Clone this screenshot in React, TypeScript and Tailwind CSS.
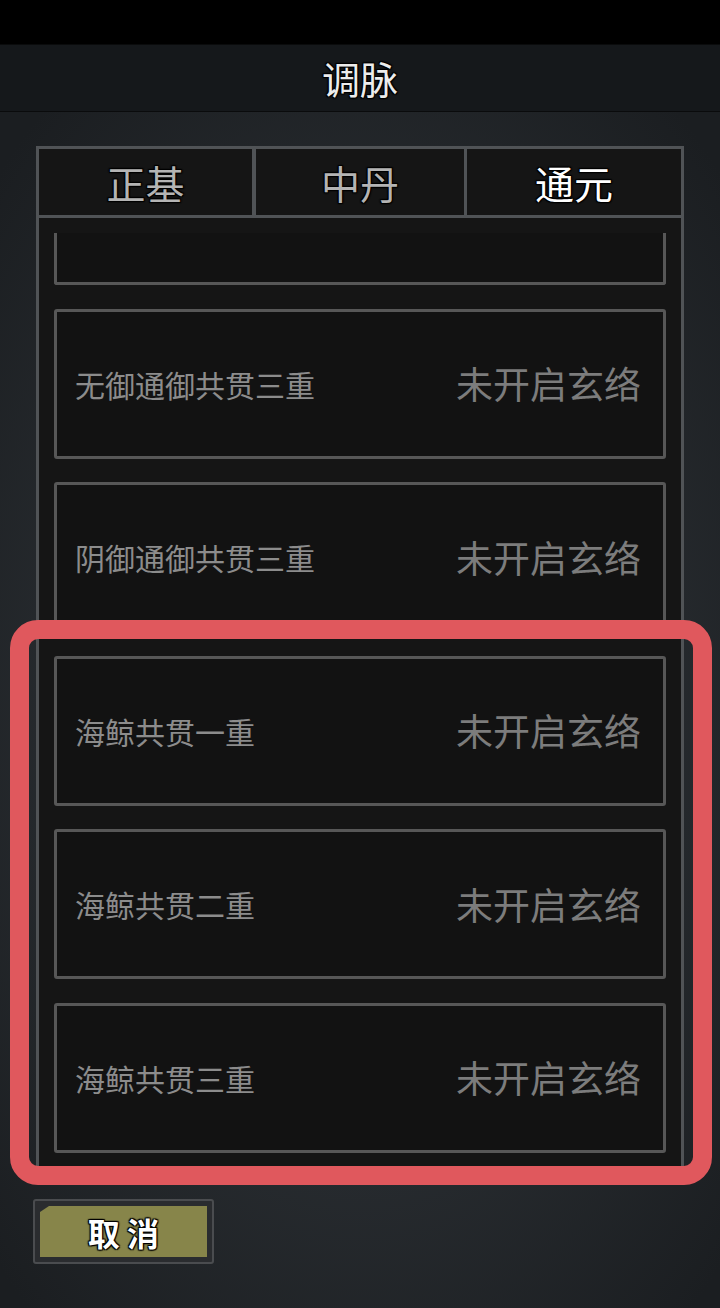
const rows = [
  "无御通御共贯三重",
  "阴御通御共贯三重",
  "海鲸共贯一重",
  "海鲸共贯二重",
  "海鲸共贯三重",
];

const outline = "[text-shadow:0_0_2px_#000,1px_1px_1px_#000,-1px_-1px_1px_#000,1px_-1px_1px_#000,-1px_1px_1px_#000]";

export default function App() {
  return (
    <div
      className="relative w-[720px] h-[1308px] overflow-hidden flex flex-col bg-[radial-gradient(ellipse_70%_60%_at_50%_55%,#33383d_0%,#272b2f_55%,#1b1e21_100%)]"
      style={{ fontFamily: '"Noto Sans CJK SC", "Noto Sans", sans-serif' }}
    >
      <div className="h-[44px] bg-black shrink-0" />

      <div className="h-[68px] shrink-0 bg-[#15181b] border-y border-[#0a0b0c] flex items-center justify-center">
        <span className={`text-[38px] leading-none text-[#ececec] ${outline}`}>调脉</span>
      </div>

      <div className="mt-[34px] ml-[36px] w-[648px] h-[1024px] shrink-0 border-[3px] border-[#505356] bg-[#151515] flex flex-col">
        <div className="h-[69px] flex border-b-[3px] border-[#505356] shrink-0">
          <div className="w-[213px] flex items-center justify-center">
            <span className={`text-[39px] leading-none text-[#b4b4b4] ${outline}`}>正基</span>
          </div>
          <div className="w-[212px] border-l-[4px] border-[#505356] flex items-center justify-center">
            <span className={`text-[39px] leading-none text-[#b4b4b4] ${outline}`}>中丹</span>
          </div>
          <div className="flex-1 border-l-[3px] border-[#505356] flex items-center justify-center">
            <span className={`text-[39px] leading-none text-white ${outline}`}>通元</span>
          </div>
        </div>

        <div className="flex-1 overflow-hidden px-[15px] pt-[15px] flex flex-col gap-[23.5px]">
          <div className="h-[52px] shrink-0 border-x-[3px] border-b-[3px] border-[#575757] rounded-b-[3px] bg-[#121212]" />
          {rows.map((name) => (
            <div
              key={name}
              className="h-[150px] shrink-0 border-[3px] border-[#575757] rounded-[3px] bg-[#121212] flex items-center justify-between pl-[18px] pr-[22px]"
            >
              <span className="text-[30px] leading-none text-[#8c8c8c]">{name}</span>
              <span className="text-[37px] leading-none text-[#7c7c7c]">未开启玄络</span>
            </div>
          ))}
        </div>
      </div>

      <div className="mt-[29px] ml-[33px] w-[181px] h-[65px] shrink-0 bg-[#2a2c2f] border-[2px] border-[#4a4c4f] rounded-[3px] p-[5px]">
        <div className="h-full bg-[#87854a] flex items-center justify-center [clip-path:polygon(9px_0,100%_0,100%_100%,0_100%,0_6px)]">
          <span className={`text-[32px] font-bold leading-none text-white ${outline}`}>取 消</span>
        </div>
      </div>

      <div className="absolute left-[10px] top-[620px] w-[702px] h-[565px] border-[19px] border-[#e0585d] rounded-[28px] pointer-events-none" />
    </div>
  );
}
